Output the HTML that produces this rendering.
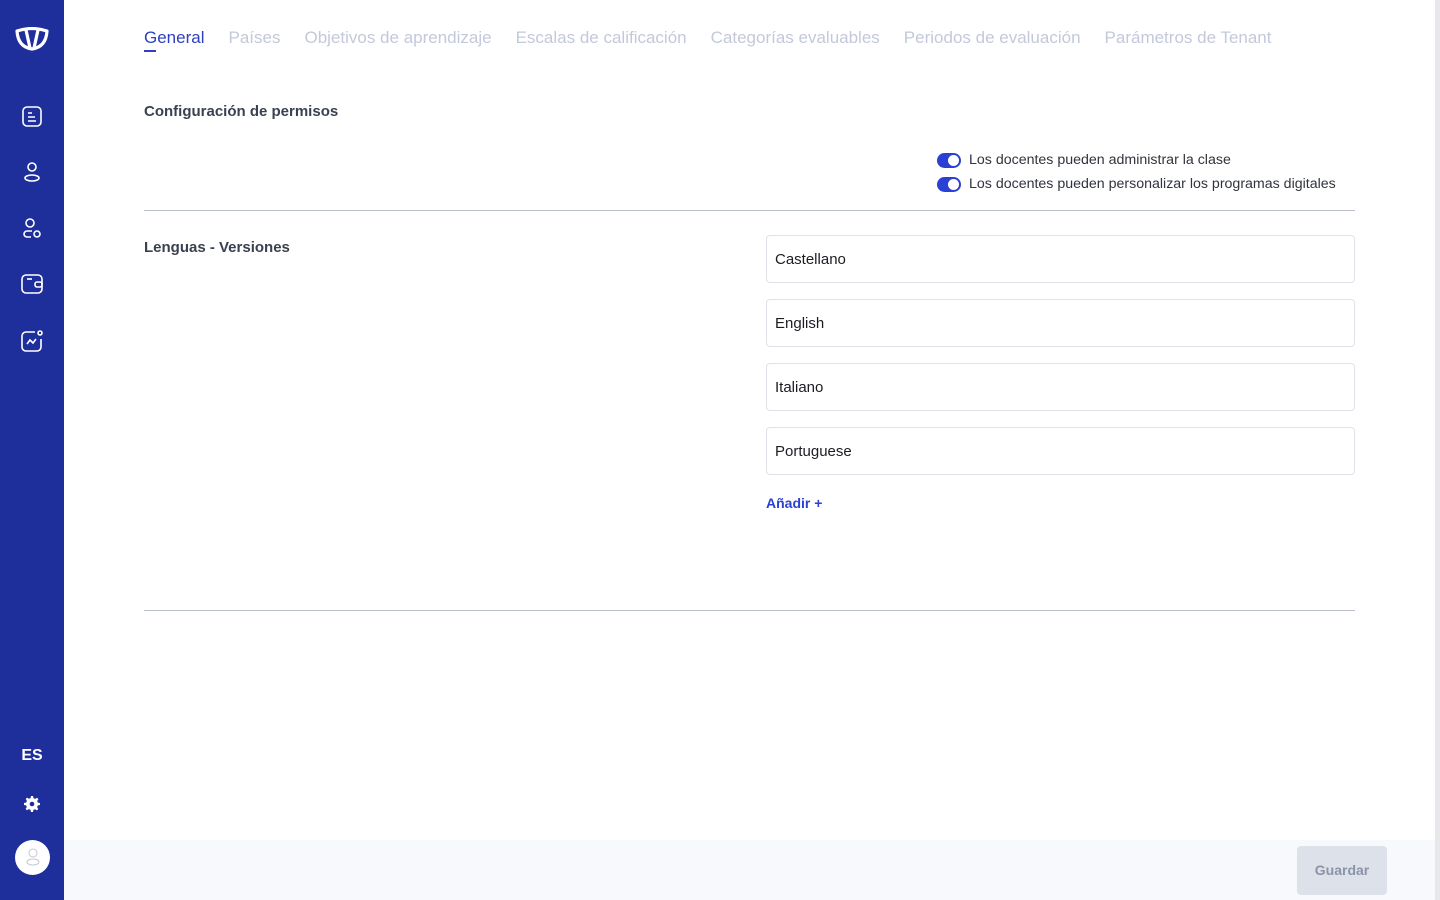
<!DOCTYPE html>
<html><head><meta charset="utf-8"><style>
*{box-sizing:border-box;margin:0;padding:0}
body{width:1440px;height:900px;overflow:hidden;background:#fff;font-family:"Liberation Sans",sans-serif;position:relative}
.sb{position:absolute;left:0;top:0;width:64px;height:900px;background:#1e2f9c}
.sb svg{position:absolute;left:20px}
.tabs{position:absolute;left:144px;top:28px;font-size:17px;color:#c3c9da;white-space:nowrap}
.tabs span{margin-right:24px;display:inline-block;position:relative}
.tabs .a{color:#2e3fbf}
.tabs .a:after{content:"";position:absolute;left:0;top:22px;width:12px;height:2px;background:#2e3fbf}
h3{position:absolute;left:144px;font-size:15px;color:#3a4150;font-weight:bold}
.tg{position:absolute;left:937px;font-size:14.2px;color:#30343c;display:flex;align-items:center}
.tg i{width:24px;height:15px;border-radius:8px;background:#2b40d4;position:relative;margin-right:8px}
.tg i:after{content:"";position:absolute;right:2px;top:2px;width:11px;height:11px;border-radius:50%;background:#fff}
.hr{position:absolute;left:144px;width:1211px;height:1px;background:#b9bec8}
.in{position:absolute;left:766px;width:589px;height:48px;border:1px solid #dfe2e8;border-radius:4px;padding:0 8px;line-height:47px;font-size:15px;color:#1b1d22}
.add{position:absolute;left:766px;top:495px;font-size:14px;font-weight:bold;color:#2b40d4}
.foot{position:absolute;left:64px;top:840px;width:1371px;height:60px;background:#f8f9fc}
.btn{position:absolute;left:1297px;top:846px;width:90px;height:49px;border-radius:4px;background:#dde2ea;color:#8a93a8;font-weight:bold;font-size:14px;text-align:center;line-height:49px}
.scr{position:absolute;left:1435px;top:0;width:5px;height:900px;background:#e6e8ec}
</style></head><body>
<div class="sb">
<svg style="left:14px;top:27px" width="36" height="24" viewBox="0 0 36 24" fill="none" stroke="#fff" stroke-width="3.2" stroke-linejoin="round"><path d="M3 4 Q18 -1 33 4 Q32 20 18 22 Q4 20 3 4Z"/><path d="M12 3 L16 21 M24 3 L20 21"/></svg>
<svg style="top:106px" width="24" height="22" viewBox="0 0 24 22" fill="none" stroke="#fff" stroke-width="1.6"><rect x="3" y="1" width="18" height="19" rx="4"/><path d="M8 7h4M8 11h7M8 15h8"/></svg>
<svg style="top:161px" width="24" height="22" viewBox="0 0 24 22" fill="none" stroke="#fff" stroke-width="1.6"><circle cx="12" cy="6" r="4"/><ellipse cx="12" cy="17" rx="7" ry="3"/></svg>
<svg style="top:217px" width="24" height="22" viewBox="0 0 24 22" fill="none" stroke="#fff" stroke-width="1.6"><circle cx="10" cy="6" r="4"/><path d="M11 20H7a3 3 0 0 1 0-6h5"/><circle cx="17" cy="17" r="3"/></svg>
<svg style="top:273px" width="24" height="22" viewBox="0 0 24 22" fill="none" stroke="#fff" stroke-width="1.6"><rect x="2" y="2" width="20" height="18" rx="4"/><path d="M7 6h5"/><rect x="15" y="9" width="7" height="5" rx="2"/></svg>
<svg style="top:329px" width="24" height="24" viewBox="0 0 24 24" fill="none" stroke="#fff" stroke-width="1.6"><path d="M15 3H6a4 4 0 0 0-4 4v11a4 4 0 0 0 4 4h11a4 4 0 0 0 4-4V10"/><circle cx="20" cy="4" r="2"/><path d="M7 15l3-4 3 3 3-4"/></svg>
<div style="position:absolute;left:0;width:64px;top:747px;text-align:center;color:#fff;font-weight:bold;font-size:16px">ES</div>
<svg style="left:24px;top:796px" width="16" height="16" viewBox="0 0 16 16"><path fill="#fff" d="M7 0h2l.5 2.2 1.6.7 1.9-1.2 1.4 1.4-1.2 1.9.7 1.6L16 7v2l-2.2.5-.7 1.6 1.2 1.9-1.4 1.4-1.9-1.2-1.6.7L9 16H7l-.5-2.2-1.6-.7-1.9 1.2-1.4-1.4 1.2-1.9-.7-1.6L0 9V7l2.2-.5.7-1.6-1.2-1.9 1.4-1.4 1.9 1.2 1.6-.7z"/><circle cx="8" cy="8" r="2.3" fill="#1e2f9c"/></svg>
<div style="position:absolute;left:15px;top:840px;width:35px;height:35px;border-radius:50%;background:#fff"></div>
<svg style="left:23px;top:846px" width="20" height="22" viewBox="0 0 20 22" fill="none" stroke="#c4c8d2" stroke-width="1"><circle cx="10" cy="7" r="4"/><ellipse cx="10" cy="16" rx="6" ry="3"/></svg>
</div>
<div class="tabs"><span class="a">General</span><span>Países</span><span>Objetivos de aprendizaje</span><span>Escalas de calificación</span><span>Categorías evaluables</span><span>Periodos de evaluación</span><span>Parámetros de Tenant</span></div>
<h3 style="top:103px">Configuración de permisos</h3>
<div class="tg" style="top:152px"><i></i>Los docentes pueden administrar la clase</div>
<div class="tg" style="top:176px"><i></i>Los docentes pueden personalizar los programas digitales</div>
<div class="hr" style="top:210px"></div>
<h3 style="top:239px">Lenguas - Versiones</h3>
<div class="in" style="top:235px">Castellano</div>
<div class="in" style="top:299px">English</div>
<div class="in" style="top:363px">Italiano</div>
<div class="in" style="top:427px">Portuguese</div>
<div class="add">Añadir +</div>
<div class="hr" style="top:610px"></div>
<div class="foot"></div>
<div class="btn">Guardar</div>
<div class="scr"></div>
</body></html>
